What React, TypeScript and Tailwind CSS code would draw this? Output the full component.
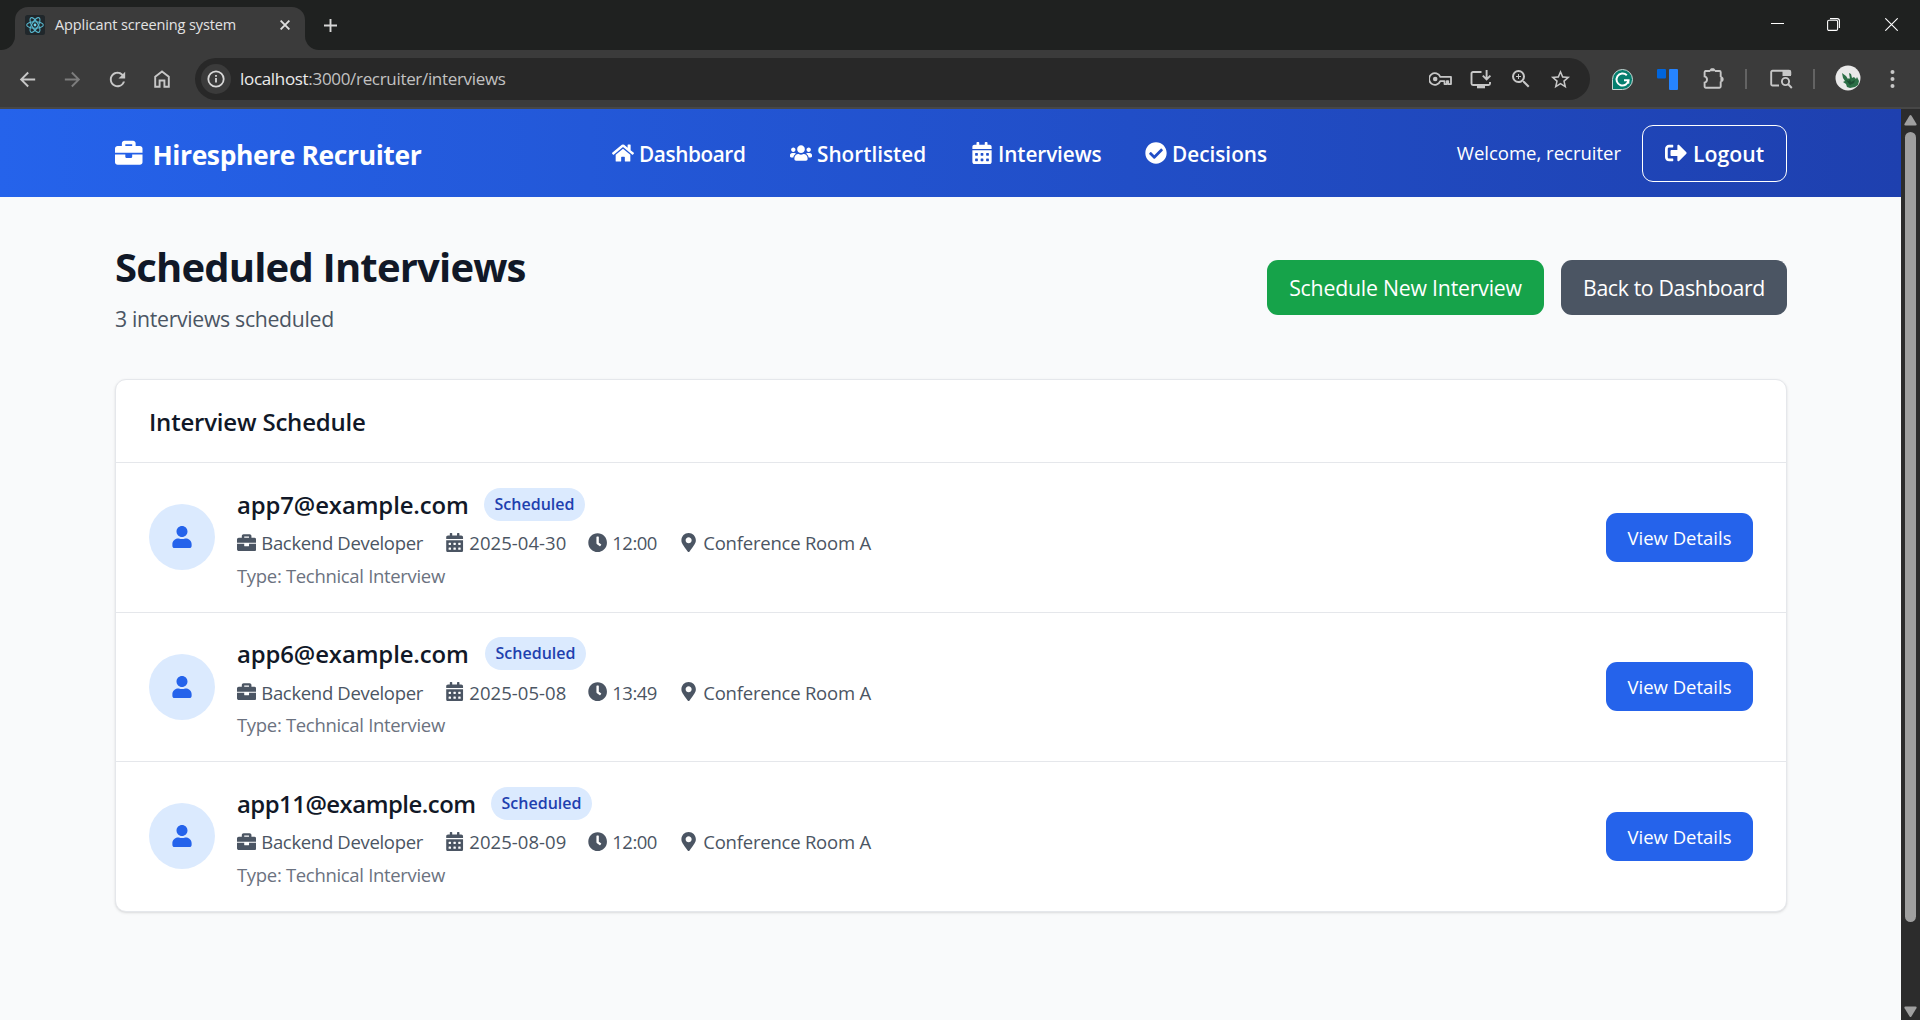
import React from "react";
import {
  FaBriefcase, FaCalendarAlt, FaCheckCircle, FaClock, FaHome, FaMapMarkerAlt, FaSignOutAlt, FaUser, FaUsers,
} from "react-icons/fa";
import { MdArrowBack, MdArrowForward, MdRefresh, MdStarBorder, MdZoomIn } from "react-icons/md";

type Interview = {
  email: string;
  emailClass: string;
  date: string;
  time: string;
};

const interviews: Interview[] = [
  { email: "app7@example.com", emailClass: "w-[247px] tracking-[-0.1px]", date: "2025-04-30", time: "12:00" },
  { email: "app6@example.com", emailClass: "w-[248px] tracking-[-0.1px]", date: "2025-05-08", time: "13:49" },
  { email: "app11@example.com", emailClass: "w-[254px] tracking-[-0.5px]", date: "2025-08-09", time: "12:00" },
];

function TabStrip() {
  return (
    <div className="flex h-[50px] items-start bg-[#1f2120]">
      <div className="flex h-full w-[15px] shrink-0 items-end bg-[#3b3b3b]">
        <div className="h-full w-full rounded-br-[14px] bg-[#1f2120]" />
      </div>
      <div className="flex h-full w-[290px] shrink-0 bg-[#1f2120] pt-[7px]">
        <div className="flex h-[43px] w-full items-center rounded-t-[13px] bg-[#3b3b3b] pr-[15px] pb-[7px] pl-[10px]">
          <svg className="h-5 w-5" viewBox="0 0 20 20" fill="none" stroke="#58b8cf" strokeWidth="1.1">
            <rect width="20" height="20" rx="2.5" fill="#20272b" stroke="none" />
            <ellipse cx="10" cy="10" rx="8.3" ry="3.2" />
            <ellipse cx="10" cy="10" rx="8.3" ry="3.2" transform="rotate(60 10 10)" />
            <ellipse cx="10" cy="10" rx="8.3" ry="3.2" transform="rotate(120 10 10)" />
            <circle cx="10" cy="10" r="1.4" fill="#6bd5ee" stroke="none" />
          </svg>
          <span className="ml-[10px] flex-1 text-[14.5px] leading-5 tracking-[-0.11px] text-[#e3e3e3]">Applicant screening system</span>
          <svg className="h-[10px] w-[10px]" viewBox="0 0 10 10" stroke="#dedede" strokeWidth="1.9">
            <path d="M.6.6l8.8 8.8M9.4.6L.6 9.4" />
          </svg>
        </div>
      </div>
      <div className="h-full w-[15px] shrink-0 bg-[#3b3b3b]">
        <div className="h-full w-full rounded-bl-[14px] bg-[#1f2120]" />
      </div>
      <svg className="mt-[19px] ml-[4px] h-[13px] w-[13px]" viewBox="0 0 13 13" stroke="#d6d6d6" strokeWidth="1.9">
        <path d="M6.5 0v13M0 6.5h13" />
      </svg>
      <div className="flex-1" />
      <div className="mr-[22px] flex h-[49px] items-center gap-[43px]">
        <svg className="h-[13px] w-[13px]" viewBox="0 0 13 13" stroke="#fff" strokeWidth="1"><path d="M0 5.5h13" /></svg>
        <svg className="mr-[2px] h-[13px] w-[13px]" viewBox="0 0 13 13" fill="none" stroke="#fff" strokeWidth="1.1">
          <rect x=".6" y="2.2" width="10" height="10.2" rx="1.4" />
          <path d="M3 .6h7.2a2.2 2.2 0 0 1 2.2 2.2V10" />
        </svg>
        <svg className="h-[13px] w-[13px]" viewBox="0 0 13 13" stroke="#fff" strokeWidth="1.1"><path d="M.3.3l12.4 12.4M12.7.3L.3 12.7" /></svg>
      </div>
    </div>
  );
}

function Toolbar() {
  return (
    <div className="flex h-[59px] items-center border-b-2 border-[#474747] bg-[#3b3b3b] pt-px pl-[16px] text-[#c7c7c7]">
      <MdArrowBack className="h-[23px] w-[23px]" />
      <MdArrowForward className="ml-[22px] h-[23px] w-[23px] text-[#7d7d7d]" />
      <MdRefresh className="ml-[22px] h-[23px] w-[23px]" />
      <svg className="ml-[25px] h-[18px] w-[16px]" viewBox="0 0 16 18" fill="none" stroke="currentColor" strokeWidth="1.9">
        <path d="M1.2 6.7L8 1.4l6.8 5.3v10h-4.4v-6.2H5.6v6.2H1.2z" />
      </svg>
      <div className="ml-[25px] flex h-[42px] w-[1395px] shrink-0 items-center rounded-full bg-[#282828] pl-[6px]">
        <span className="flex h-[30px] w-[30px] items-center justify-center rounded-full bg-[#3b3b3b]">
          <svg className="h-[18px] w-[18px]" viewBox="0 0 18 18" fill="none" stroke="#d8d8d8" strokeWidth="1.8">
            <circle cx="9" cy="9" r="7.7" />
            <path d="M9 8v4.6M9 5v1.8" />
          </svg>
        </span>
        <span className="ml-[9px] w-[280px] text-[17px] leading-6 tracking-[-0.32px] text-[#c2c2c2]">
          <span className="text-[#ececec]">localhost</span>:3000/recruiter/interviews
        </span>
        <span className="flex-1" />
        <svg className="h-[14px] w-[23px]" viewBox="0 0 23 14" fill="none" stroke="currentColor" strokeWidth="1.8">
          <path d="M11.3 4.9a5.8 5.8 0 1 0 0 4.2h4.2v3h2.3v-3h1.4v3H22V4.9z" strokeLinejoin="round" />
          <circle cx="6.2" cy="7" r="2.3" fill="currentColor" stroke="none" />
        </svg>
        <svg className="ml-[18px] h-[19px] w-[22px]" viewBox="0 0 22 19" fill="none" stroke="currentColor" strokeWidth="1.9">
          <path d="M11.5 2H3a1.5 1.5 0 0 0-1.5 1.5v10A1.5 1.5 0 0 0 3 15h15.500a1.500 1.500 0 0 0 1.500-1.500V12M16.600 0v8.500M12.800 5.600l3.800 3.800 3.800-3.800" />
          <path d="M7 16.800h8" strokeWidth="3" />
        </svg>
        <MdZoomIn className="ml-[17px] h-6 w-6" />
        <MdStarBorder className="mr-[18px] ml-[16px] h-[23px] w-[23px]" />
      </div>
      <svg className="ml-[22px] h-[21px] w-[21px] shrink-0" viewBox="0 0 21 21" fill="none">
        <path d="M10.500.5a10 10 0 0 1 0 20H.5v-10a10 10 0 0 1 10-10z" fill="#047e6e" stroke="#c9d8d5" />
        <path d="M14.800 6.300A6 6 0 1 0 16.500 11.200H12" stroke="#fff" strokeWidth="2" />
        <path d="M16.500 11.200v3.400" stroke="#fff" strokeWidth="1.600" />
      </svg>
      <svg className="ml-[24px] h-[21px] w-[21px] shrink-0" viewBox="0 0 21 21">
        <rect width="9" height="9.500" rx="1" fill="#0065dd" />
        <rect x="12" width="9" height="21" rx="1" fill="#2684ff" />
      </svg>
      <svg className="mb-[2px] ml-[25px] h-[21px] w-[22px] shrink-0" viewBox="0 0 22 21" fill="none" stroke="currentColor" strokeWidth="1.900">
        <path d="M2 3h5.200M12 3h4.500a1.200 1.200 0 0 1 1.200 1.200V9M17.700 13.500v5a1.200 1.200 0 0 1-1.200 1.200H2.800A1.200 1.200 0 0 1 1.600 18.500V14.600a3.200 3.200 0 0 0 0-6.200V4.200A1.200 1.200 0 0 1 2.800 3" />
        <path d="M6.800 3a2.700 2.700 0 0 1 5.400 0zM17.700 8.600a2.700 2.700 0 0 1 0 5.400z" fill="currentColor" strokeWidth=".5" />
      </svg>
      <span className="ml-[20px] h-5 w-[2px] shrink-0 bg-[#636363]" />
      <svg className="ml-[23px] h-[20px] w-[23px] shrink-0" viewBox="0 0 23 20" fill="none" stroke="currentColor" strokeWidth="1.900">
        <path d="M9 16.500H2.500A1.300 1.300 0 0 1 1.200 15.200V3A1.300 1.300 0 0 1 2.500 1.700H19A1.300 1.300 0 0 1 20.300 3v3" />
        <path d="M12.500 1h7.500l1 1v5h-8.500z" fill="currentColor" stroke="none" />
        <circle cx="15.500" cy="12.500" r="3.600" />
        <path d="M18 15l3.800 4" />
      </svg>
      <span className="ml-[20px] h-5 w-[2px] shrink-0 bg-[#636363]" />
      <svg className="mb-[2px] ml-[20px] h-[26px] w-[26px] shrink-0" viewBox="0 0 26 26">
        <circle cx="13" cy="13" r="12.500" fill="#e9e9e9" />
        <path d="M7 8l4 3 2 3 1-1 1 1-1-6 2 1 1 4 2-1 2 2 1-2 2 4-1 4-3 2-5 1-3-1-1-3-3-2 2-1-2-3z" fill="#2b6e46" />
        <path d="M11 15l3 1 1-2 1 3 4-2-1 3-4 2z" fill="#1c4f33" />
      </svg>
      <svg className="ml-[29px] h-[20px] w-[5px] shrink-0" viewBox="0 0 5 20" fill="currentColor">
        <circle cx="2.500" cy="3" r="2" /><circle cx="2.500" cy="10" r="2" /><circle cx="2.500" cy="17" r="2" />
      </svg>
    </div>
  );
}

function NavLink({ icon, label, className }: { icon: React.ReactNode; label: string; className: string }) {
  return (
    <a className={`flex items-center gap-[5px] text-[20.75px] leading-[33px] font-semibold ${className}`}>
      <span className="pb-[3px] text-[22px]">{icon}</span>
      <span>{label}</span>
    </a>
  );
}

function Header() {
  return (
    <header className="flex h-[88px] items-center bg-linear-to-r from-[#2563eb] to-[#1e40af] pr-[114px] pl-[115px] text-white">
      <div className="flex w-[497px] items-center gap-[10px] text-[26.5px] leading-[38px] font-bold tracking-[-0.42px]">
        <FaBriefcase className="h-[27.500px] w-[27.500px]" />
        <span className="pt-[4px]">Hiresphere Recruiter</span>
      </div>
      <nav className="flex items-center pt-[3px]">
        <NavLink icon={<FaHome />} label="Dashboard" className="w-[178px] tracking-[-0.4px]" />
        <NavLink icon={<FaUsers />} label="Shortlisted" className="w-[181px]" />
        <NavLink icon={<FaCalendarAlt />} label="Interviews" className="w-[174px] tracking-[-0.1px]" />
        <NavLink icon={<FaCheckCircle />} label="Decisions" className="w-[130px]" />
      </nav>
      <span className="ml-auto text-[18.500px] font-medium">Welcome, recruiter</span>
      <button className="ml-[21px] flex h-[57px] w-[145px] items-center gap-[6px] rounded-[11px] border border-white pl-[22px] text-[21.250px] font-semibold">
        <FaSignOutAlt className="h-[22px] w-[22px]" />
        <span className="pt-[2px]">Logout</span>
      </button>
    </header>
  );
}

function InterviewRow({ item }: { item: Interview }) {
  return (
    <li className="flex h-[149.500px] items-center border-t border-[#e5e7eb] px-[33px]">
      <span className="flex h-[66px] w-[66px] items-center justify-center rounded-full bg-[#dbeafe] text-[#2563eb]">
        <FaUser className="h-[22px] w-[22px]" />
      </span>
      <div className="ml-[22px] flex-1 pt-[3px]">
        <div className="flex h-[33px] items-center">
          <h3 className={`text-[23.900px] leading-[33px] font-semibold text-[#111827] ${item.emailClass}`}>{item.email}</h3>
          <span className="flex h-[33px] w-[101px] items-center justify-center rounded-full bg-[#dbeafe] pb-px text-[16px] font-semibold text-[#1e40af]">
            Scheduled
          </span>
        </div>
        <div className="mt-[8px] flex h-[27px] items-center text-[18.500px] text-[#4b5563]">
          <span className="flex w-[208px] items-center gap-[5px]"><FaBriefcase className="h-[19.250px] w-[19.250px]" /><span className="pt-[2px] tracking-[-0.320px] whitespace-nowrap">Backend Developer</span></span>
          <span className="flex w-[143px] items-center gap-[5px]"><FaCalendarAlt className="h-[19.250px] w-[19.250px]" /><span className="pt-[2px] tracking-[0.060px]">{item.date}</span></span>
          <span className="flex w-[91px] items-center gap-[5px]"><FaClock className="h-[19.250px] w-[19.250px]" /><span className="pt-[2px] tracking-[-0.500px]">{item.time}</span></span>
          <span className="flex items-center gap-[5px]"><FaMapMarkerAlt className="h-[19.250px] w-[19.250px]" /><span className="pt-[2px] tracking-[-0.220px]">Conference Room A</span></span>
        </div>
        <p className="mt-[6px] text-[18.500px] leading-[28px] tracking-[-0.320px] text-[#6b7280]">Type: Technical Interview</p>
      </div>
      <button className="h-[49px] w-[147px] rounded-[11px] bg-[#2563eb] pt-px text-[18.500px] text-white">View Details</button>
    </li>
  );
}

function Scrollbar() {
  return (
    <div className="flex w-[19px] shrink-0 flex-col items-center bg-[#2c2c2c] pt-[6px] pb-[3px]">
      <svg className="h-[11px] w-[13px]" viewBox="0 0 13 11" fill="#9f9f9f"><path d="M5.600.6Q6.500-.5 7.400.6l5 8.200q.8 1.700-.9 1.700h-10Q-.2 10.500.6 8.800z" /></svg>
      <div className="mt-[6px] h-[790px] w-[11px] rounded-full bg-[#9f9f9f]" />
      <svg className="mt-auto h-[11px] w-[13px] rotate-180" viewBox="0 0 13 11" fill="#9f9f9f"><path d="M5.600.6Q6.500-.5 7.400.6l5 8.200q.8 1.700-.9 1.700h-10Q-.2 10.500.6 8.800z" /></svg>
    </div>
  );
}

export default function App() {
  return (
    <div className="flex h-[1020px] w-[1920px] flex-col overflow-hidden bg-[#f9fafb] font-['Open_Sans',sans-serif]">
      <TabStrip />
      <Toolbar />
      <div className="flex min-h-0 flex-1">
        <div className="flex-1">
          <Header />
          <main className="pt-[44px] pr-[114px] pl-[115px]">
            <div className="flex h-[94px] items-center justify-between">
              <div className="pt-px">
                <h1 className="text-[40px] leading-[50px] font-bold tracking-[-0.820px] text-[#111827]">Scheduled Interviews</h1>
                <p className="mt-[10px] text-[21.250px] leading-[33px] tracking-[-0.320px] text-[#4b5563]">3 interviews scheduled</p>
              </div>
              <div className="flex gap-[17px] pb-px text-[21.250px] text-white">
                <button className="h-[55px] w-[277px] rounded-[11px] bg-[#16a34a] pt-px tracking-[-0.200px]">Schedule New Interview</button>
                <button className="h-[55px] w-[226px] rounded-[11px] bg-[#4b5563] pt-px tracking-[-0.350px]">Back to Dashboard</button>
              </div>
            </div>
            <section className="mt-[44px] rounded-[11px] border border-[#e5e7eb] bg-white shadow-sm">
              <h2 className="flex h-[82px] items-center px-[33px] pt-px text-[24px] font-semibold tracking-[-0.200px] text-[#111827]">Interview Schedule</h2>
              <ul>
                {interviews.map((item) => <InterviewRow key={item.email} item={item} />)}
              </ul>
            </section>
          </main>
        </div>
        <Scrollbar />
      </div>
    </div>
  );
}
